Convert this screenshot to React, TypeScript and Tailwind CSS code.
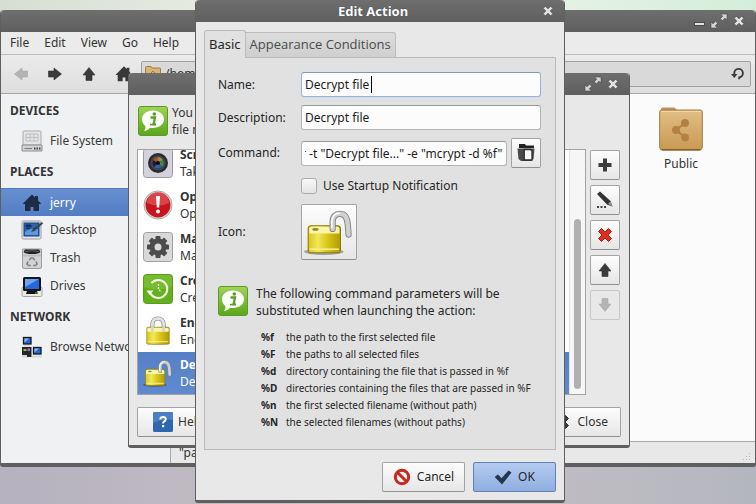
import { useLayoutEffect, useRef } from 'react';
import type { ReactNode } from 'react';

/* ---------- icons ---------- */

function Padlock({ open = false, className }: { open?: boolean; className: string }) {
  return (
    <svg viewBox="0 0 48 48" className={className} aria-hidden="true">
      <defs>
        <linearGradient id="lockBody" x1="0" y1="0" x2="1" y2="0">
          <stop offset="0" stopColor="#d8c81c" />
          <stop offset="0.3" stopColor="#f1e75a" />
          <stop offset="0.6" stopColor="#d8c616" />
          <stop offset="1" stopColor="#b09a0a" />
        </linearGradient>
      </defs>
      <ellipse cx={open ? 19 : 24} cy="43" rx="19" ry="3" fill="#000" opacity="0.3" />
      {open ? (
        <>
          <rect x="4" y="18" width="31" height="26" rx="3" fill="url(#lockBody)" stroke="#8a7a08" />
          <path d="M5 21q0-2 2-2h25q2 0 2 2v4.500H5z" fill="#faf5a8" />
          <ellipse cx="11" cy="21.500" rx="3" ry="1.300" fill="#8d8630" />
          <path d="M5.500 40.500h28" stroke="#f6ee8a" strokeWidth="1.500" />
          <path d="M27.500 21V14c0-5 3-7.500 7-7.500 5 0 7 4 7.500 10l.8 10" fill="none" stroke="#858585" strokeWidth="6" strokeLinecap="round" />
          <path d="M27.500 21V14c0-5 3-7.500 7-7.500 5 0 7 4 7.500 10l.8 10" fill="none" stroke="#d0d0d0" strokeWidth="4.200" strokeLinecap="round" />
          <path d="M26.700 20V14c0-5 3-8 7-8" fill="none" stroke="#fff" strokeWidth="1.500" strokeLinecap="round" />
        </>
      ) : (
        <>
          <path d="M15 23V13c0-6 4-9 9-9s9 3 9 9v10" fill="none" stroke="#808080" strokeWidth="6.500" />
          <path d="M15 23V13c0-6 4-9 9-9s9 3 9 9v10" fill="none" stroke="#e2e2e2" strokeWidth="4.500" />
          <rect x="6" y="18" width="36" height="27" rx="2" fill="url(#lockBody)" stroke="#8a7a08" />
          <path d="M7 21q0-2 2-2h30q2 0 2 2v4H7z" fill="#faf5a8" />
          <path d="M15 25V17M33 25V17" stroke="#d5d5d0" strokeWidth="4.500" />
          <path d="M7.500 41h33" stroke="#f6ee8a" strokeWidth="1.500" />
        </>
      )}
    </svg>
  );
}

function InfoIcon() {
  return (
    <svg viewBox="0 0 30 30" className="size-[30px] shrink-0" aria-hidden="true">
      <defs>
        <linearGradient id="infoGreen" x1="0" y1="0" x2="0" y2="1">
          <stop offset="0" stopColor="#a3d35b" />
          <stop offset="0.6" stopColor="#72b92f" />
          <stop offset="1" stopColor="#5ba51d" />
        </linearGradient>
      </defs>
      <rect x="0.500" y="0.500" width="29" height="29" rx="2.500" fill="url(#infoGreen)" stroke="#5c9a28" />
      <path d="M15 4.500c6.300 0 11 3.700 11 8.800S21.300 22 15 22c-1 0-2-.1-3-.3-1.500 1.800-3.600 3-6 3.300 1-1.300 1.600-2.900 1.500-4.800C5.300 18.500 4 16 4 13.300 4 8.200 8.700 4.500 15 4.500z" fill="#fcfdf8" />
      <circle cx="16.300" cy="8" r="1.800" fill="#5f9c2a" />
      <path d="M12.500 11.500h4.500l-1.400 6.500h2" fill="none" stroke="#5f9c2a" strokeWidth="2.300" />
      <path d="M12 18.600h6" stroke="#5f9c2a" strokeWidth="1.600" />
    </svg>
  );
}

function ArrowIcon({ turn = '', faded = false }: { turn?: string; faded?: boolean }) {
  return (
    <svg viewBox="0 0 16 16" className={`size-4 ${turn}`} aria-hidden="true">
      <path d="M8 1.500 14 9h-3v5.500H5V9H2z" fill={faded ? '#b4b4b4' : '#3b3b3b'} stroke={faded ? '#a8a8a8' : '#303030'} strokeWidth="0.600" />
    </svg>
  );
}

function HomeIcon({ className, color }: { className: string; color: string }) {
  return (
    <svg viewBox="0 0 20 20" className={className} aria-hidden="true">
      <path d="M10 1.500 13 4.500V3h3v4.500l3.500 3.500H17v7h-5.500v-4h-3v4H3v-7H.5z" fill={color} />
    </svg>
  );
}

function Cross({ className, color, edge }: { className: string; color: string; edge: string }) {
  return (
    <svg viewBox="0 0 16 16" className={className} aria-hidden="true">
      <path d="M4.500 1.500 8 5l3.500-3.500 3 3L11 8l3.500 3.500-3 3L8 11l-3.500 3.500-3-3L5 8 1.500 4.500z" fill={color} stroke={edge} strokeWidth="1" strokeLinejoin="round" />
    </svg>
  );
}

function MaximizeIcon() {
  return (
    <svg viewBox="0 0 18 16" className="h-4 w-[18px]" aria-hidden="true">
      <path d="M10.500 1H17v6l-2-1.800-2.600 2.500-2.100-2 2.500-2.500zM1 9l2 1.800 2.600-2.500 2.100 2-2.500 2.500L7.500 15H1z" fill="#d4d4d4" stroke="#484848" strokeWidth="0.600" />
    </svg>
  );
}

function DriveBoxIcon() {
  return (
    <svg viewBox="0 0 22 22" className="size-[22px]" aria-hidden="true">
      <rect x="2" y="1" width="18" height="14" rx="1" fill="#e6e6e6" stroke="#aaa" />
      <path d="M5 4h12v7H5zM5 7.500h12M9 4v7M13 4v7" fill="none" stroke="#bcbcbc" />
      <path d="M1 15h20v6H1z" fill="#d2d2d2" stroke="#8e8e8e" />
      <path d="M3.500 18.500H11" stroke="#777" />
      <path d="M13 17.500h1.500v2H13zM15.500 17.500H17v2h-1.500zM18 17.500h1.500v2H18z" fill="#444" />
    </svg>
  );
}

function DesktopIcon() {
  return (
    <svg viewBox="0 0 22 22" className="size-[22px]" aria-hidden="true">
      <rect x="1" y="2" width="19" height="18" rx="1.500" fill="#e4e6e8" stroke="#9a9da1" />
      <rect x="3" y="4" width="15" height="13" fill="#2a67b4" stroke="#173e74" />
      <path d="M4 13q5-4 13-3v6H4z" fill="#5b98dc" />
      <path d="M5 6h5v2H5zM5 9.500h4M12 9.500h4" stroke="#12305c" fill="#12305c" />
      <path d="M21 3 12 10l-2 3 3.500-1L22 4.500z" fill="#3b3f46" />
    </svg>
  );
}

function TrashIcon() {
  return (
    <svg viewBox="0 0 22 22" className="size-[22px]" aria-hidden="true">
      <path d="M1.500 2h19v18q0 1.500-1.500 1.500H3Q1.500 21.500 1.500 20z" fill="#d4d4d4" stroke="#9c9c9c" />
      <rect x="2" y="7.500" width="18" height="2" fill="#bdbdbd" />
      <path d="M4 2.500h14l1.500 2.500q-2 2-8.500 2T2.500 5z" fill="#1f1f1f" />
      <path d="M4 4.500q7-1.500 14 0" stroke="#6a6a6a" fill="none" />
      <path d="M8.300 13.200 10 11h2l1.800 2.200M15 14.500l1 2.500-1.500 1.500H12M7 14.500 6 17l1.500 1.500H10" fill="none" stroke="#828282" strokeWidth="1.700" />
    </svg>
  );
}

function MonitorIcon() {
  return (
    <svg viewBox="0 0 22 22" className="size-[22px]" aria-hidden="true">
      <rect x="1" y="12" width="20" height="9.500" rx="1.500" fill="#e9e9e6" stroke="#a5a5a0" />
      <rect x="2" y="2" width="18" height="14" rx="1.500" fill="#15171b" />
      <rect x="4" y="4" width="14" height="10" fill="#2768d8" />
      <path d="M4 4h14L4 12z" fill="#6ea2f2" />
      <path d="M6 16h10l1 3H5z" fill="#101114" />
      <path d="M14 18h3" stroke="#7dba32" />
    </svg>
  );
}

function NetworkIcon() {
  return (
    <svg viewBox="0 0 22 22" className="size-[22px]" aria-hidden="true">
      <path d="M2.500 9h7v2h-7z" fill="#deded8" />
      <rect x="2.500" y="1.500" width="7.500" height="6.500" fill="#2566d4" stroke="#15171b" strokeWidth="1.300" />
      <rect x="12.500" y="11.500" width="7.500" height="6.500" fill="#2566d4" stroke="#15171b" strokeWidth="1.300" />
      <path d="M3.500 2.500h4.500l-4.500 4zM13.500 12.500H18l-4.500 4z" fill="#8db8f6" />
      <path d="M1 11h9.500v10H1z" fill="#25262a" />
      <path d="M2.500 13h3v2h-3z" fill="#8cc63f" />
      <path d="M6.500 12.500h2.500v2.500H6.500z" fill="#9a6bd0" />
      <path d="M1 19h5v2.500H1zM11 19.500h10v2H11z" fill="#d8d8d4" />
    </svg>
  );
}

function CameraIcon() {
  return (
    <svg viewBox="0 0 30 30" className="size-[30px]" aria-hidden="true">
      <rect x="0.500" y="0.500" width="29" height="29" rx="3" fill="#d3d2da" stroke="#9a99a2" />
      <circle cx="15" cy="15" r="10" fill="#2b2c31" />
      <circle cx="15" cy="15" r="7.500" fill="#45464d" />
      <circle cx="15" cy="15" r="5.500" fill="#1a1c30" />
      <path d="M15 15 10 12a6 6 0 0 1 5-3z" fill="#b04a3a" />
      <path d="M15 15V9a6 6 0 0 1 5 3z" fill="#a38a34" />
      <path d="M15 15l5-3a6 6 0 0 1-1 7z" fill="#3d8a4e" />
      <path d="M15 15l4 4a6 6 0 0 1-8 0z" fill="#365cae" />
      <circle cx="15" cy="15" r="2" fill="#0d0e16" />
    </svg>
  );
}

function AlertIcon() {
  return (
    <svg viewBox="0 0 30 30" className="size-[30px]" aria-hidden="true">
      <circle cx="15" cy="15" r="14" fill="#dedede" stroke="#a9a9a9" />
      <circle cx="15" cy="15" r="12.500" fill="#c8141c" />
      <path d="M4 13a11 11 0 0 1 22 0q-11 5-22 0z" fill="#e05a5c" opacity="0.700" />
      <path d="M13 6h4l-.8 11.500h-2.400z" fill="#fff" />
      <circle cx="15" cy="21.500" r="2" fill="#fff" />
    </svg>
  );
}

function GearIcon() {
  const teeth = [0, 45, 90, 135, 180, 225, 270, 315];
  return (
    <svg viewBox="0 0 30 30" className="size-[30px]" aria-hidden="true">
      <rect x="0.500" y="0.500" width="29" height="29" rx="3" fill="#d9d9d9" stroke="#a0a0a0" />
      {teeth.map((a) => (
        <rect key={a} x="12.500" y="4" width="5" height="6" rx="0.800" fill="#4c4c4c" transform={`rotate(${a} 15 15)`} />
      ))}
      <circle cx="15" cy="15" r="6" fill="none" stroke="#4c4c4c" strokeWidth="5" />
    </svg>
  );
}

function HistoryIcon() {
  return (
    <svg viewBox="0 0 30 30" className="size-[30px]" aria-hidden="true">
      <rect x="0.500" y="0.500" width="29" height="29" rx="3" fill="#62b01c" stroke="#589a20" />
      <path d="M1 4q0-3 3-3h22q3 0 3 3v9q-14 5-28 0z" fill="#8cc63f" opacity="0.500" />
      <path d="M7 18.500A9 9 0 1 0 8.500 9" fill="none" stroke="#f4faec" strokeWidth="2" />
      <path d="M3.500 16.500h7L6.500 21z" fill="#f4faec" />
      <path d="M15.500 10v5.500l3 2.500" fill="none" stroke="#e4f4d0" strokeWidth="1.300" strokeDasharray="2 1" />
    </svg>
  );
}

function FolderMini() {
  return (
    <svg viewBox="0 0 16 16" className="size-4" aria-hidden="true">
      <path d="M.5 1.500q0-1 1-1H6l1 1.500h7.500q1 0 1 1v11q0 1-1 1h-13q-1 0-1-1z" fill="#dcb377" stroke="#a67a3c" />
      <path d="M8 5 3.500 9.500H5V13h6V9.500h1.500z" fill="none" stroke="#a67a3c" />
    </svg>
  );
}

function SharedFolder() {
  return (
    <svg viewBox="0 0 44 46" className="h-[46px] w-11" aria-hidden="true">
      <defs>
        <linearGradient id="folderTan" x1="0" y1="0" x2="0" y2="1">
          <stop offset="0" stopColor="#e2bd86" />
          <stop offset="1" stopColor="#c99a51" />
        </linearGradient>
      </defs>
      <path d="M2 10V3q0-1.500 1.500-1.500h12L18 4h22q2 0 2 2v6z" fill="#bd9460" />
      <path d="M.7 6q0-2 2-2h38.600q2 0 2 2v35q0 3-3 3H3.700q-3 0-3-3z" fill="url(#folderTan)" stroke="#a5793a" />
      <path d="M2 5.500h40" stroke="#f0d6ab" />
      <path d="M2.500 43.700h39" stroke="#83602c" strokeWidth="1.500" />
      <g fill="#b38243">
        <circle cx="26" cy="17" r="4" />
        <circle cx="26" cy="31.500" r="4" />
        <circle cx="17" cy="24" r="4" />
      </g>
      <path d="M26 17l-9 7 9 7.500" fill="none" stroke="#b38243" strokeWidth="2.200" />
    </svg>
  );
}

/* ---------- shared pieces ---------- */

const button =
  'flex items-center rounded-xs border border-[#a3a3a3] border-b-[#8f8f8f] bg-linear-to-b from-[#fdfdfd] to-[#e6e6e6]';

function TitleBar({ title, controls }: { title?: string; controls: ReactNode }) {
  return (
    <header className="flex h-[22px] shrink-0 items-center rounded-t-[4px] bg-linear-to-b from-[#6e6e6e] to-[#5f5f5f]">
      <h2 className="flex-1 pl-2 text-center text-[13px] leading-5 font-bold text-white [text-shadow:0_0_1px_#26344a]">{title}</h2>
      <div className="flex items-center gap-[5px] pr-[10px]">{controls}</div>
    </header>
  );
}

function CloseControl() {
  return (
    <button type="button" aria-label="Close window" className="flex">
      <Cross className="size-3" color="#e2e2e2" edge="#4a4a4a" />
    </button>
  );
}

function MaximizeControl() {
  return (
    <button type="button" aria-label="Maximize" className="flex">
      <MaximizeIcon />
    </button>
  );
}

/* ---------- file manager ---------- */

function PlaceHeading({ children }: { children: ReactNode }) {
  return <h3 className="flex h-[33px] items-center pl-[9px] font-bold text-[#333]">{children}</h3>;
}

function Place({ icon, label, active = false }: { icon: ReactNode; label: string; active?: boolean }) {
  return (
    <a
      href="#"
      className={`flex h-7 items-center gap-[7px] pl-5 whitespace-nowrap ${
        active ? 'border-t border-[#4f7abf] bg-linear-to-b from-[#6790d0] to-[#527dc2] text-white' : 'text-[#3a3a3a]'
      }`}
    >
      <span className="flex w-[22px] justify-center">{icon}</span>
      {label}
    </a>
  );
}

function FileManager() {
  return (
    <section className="absolute inset-x-0 top-[10px] flex h-[457px] flex-col rounded-t-[4px] rounded-b-[3px] border-x border-b-4 border-[#5f5f5f] bg-[#e8e8e8]">
      <TitleBar
        controls={
          <>
            <button type="button" aria-label="Minimize" className="mt-[6px] h-[4px] w-[11px] border border-[#4a4a4a] bg-[#e2e2e2]" />
            <MaximizeControl />
            <CloseControl />
          </>
        }
      />
      <nav className="flex h-[23px] items-center gap-[15px] border-b border-[#bcbcbc] bg-[#ebebeb] px-[9px] text-[#333]">
        {['File', 'Edit', 'View', 'Go', 'Help'].map((m) => (
          <button key={m} type="button">
            {m}
          </button>
        ))}
      </nav>
      <div className="flex h-[39px] items-center border-b border-[#a6a6a6] bg-linear-to-b from-[#ebebeb] to-[#dedede] pr-1">
        <div className="flex w-[140px] items-center gap-[18px] pl-3">
          <button type="button" aria-label="Back"><ArrowIcon turn="-rotate-90" faded /></button>
          <button type="button" aria-label="Forward"><ArrowIcon turn="rotate-90" /></button>
          <button type="button" aria-label="Up"><ArrowIcon /></button>
          <button type="button" aria-label="Home"><HomeIcon className="size-[18px]" color="#383838" /></button>
        </div>
        <div className="flex h-[26px] flex-1 items-center gap-1 rounded-xs border border-[#a0a0a0] bg-[#d9d9d9] pr-1 pl-[3px]">
          <FolderMini />
          <span className="flex-1 text-[#333]">/home/jerry</span>
          <button type="button" aria-label="Reload">
            <svg viewBox="0 0 16 16" className="size-4" aria-hidden="true">
              <path d="M4.300 9.500V7.200a4.300 4.300 0 1 1 4.900 4.200v1.800" fill="none" stroke="#3b3b3b" strokeWidth="1.900" />
              <path d="M1 8h6.500l-3.200 4z" fill="#3b3b3b" />
            </svg>
          </button>
        </div>
      </div>
      <div className="flex flex-1">
        <aside className="w-[170px] border-r border-[#a8a8a8] bg-[#eff1f3]">
          <PlaceHeading>DEVICES</PlaceHeading>
          <Place icon={<DriveBoxIcon />} label="File System" />
          <PlaceHeading>PLACES</PlaceHeading>
          <Place icon={<HomeIcon className="size-5" color="#1c2c44" />} label="jerry" active />
          <Place icon={<DesktopIcon />} label="Desktop" />
          <Place icon={<TrashIcon />} label="Trash" />
          <Place icon={<MonitorIcon />} label="Drives" />
          <PlaceHeading>NETWORK</PlaceHeading>
          <Place icon={<NetworkIcon />} label="Browse Network" />
        </aside>
        <div className="flex flex-1 flex-col">
          <main className="flex flex-1 justify-end bg-[#fbfbfb]">
            <figure className="mt-3 mr-[52px] flex h-20 flex-col items-center">
              <SharedFolder />
              <figcaption className="mt-[3px] text-[#333]">Public</figcaption>
            </figure>
          </main>
          <footer className="flex h-[22px] items-center justify-between border-t border-[#a8a8a8] pr-1 pl-2 text-[#333]">
            <span>"package" selected</span>
            <svg viewBox="0 0 8 8" className="mt-2 size-2" aria-hidden="true">
              <path d="M6 0h1v1H6zM3 3h1v1H3zM6 3h1v1H6zM0 6h1v1H0zM3 6h1v1H3zM6 6h1v1H6z" fill="#b8b8b8" />
            </svg>
          </footer>
        </div>
      </div>
    </section>
  );
}

/* ---------- custom actions ---------- */

const actions = [
  { icon: <CameraIcon />, name: 'Screenshot', note: 'Take a screenshot' },
  { icon: <AlertIcon />, name: 'Open as Root', note: 'Open as root' },
  { icon: <GearIcon />, name: 'Make Executable', note: 'Make executable' },
  { icon: <HistoryIcon />, name: 'Create Backup', note: 'Create backup' },
  { icon: <Padlock className="size-[30px]" />, name: 'Encrypt file', note: 'Encrypt file' },
  { icon: <Padlock open className="size-[30px]" />, name: 'Decrypt file', note: 'Decrypt file', active: true },
];

function SideButton({ label, disabled = false, children }: { label: string; disabled?: boolean; children: ReactNode }) {
  return (
    <button type="button" aria-label={label} disabled={disabled} className={`${button} size-[30px] justify-center disabled:border-[#c6c6c6] disabled:bg-none`}>
      {children}
    </button>
  );
}

function CustomActions() {
  return (
    <section className="absolute top-[73px] left-[128px] flex h-[375px] w-[502px] flex-col rounded-t-[4px] rounded-b-[3px] border-x border-b-3 border-[#5f5f5f] bg-[#e8e8e8]">
      <TitleBar controls={<><MaximizeControl /><CloseControl /></>} />
      <div className="flex flex-1 flex-col px-2 pb-2">
        <div className="flex h-[54px] gap-1 pt-[11px] pl-px">
          <InfoIcon />
          <p className="-mt-0.5 leading-[17px] whitespace-nowrap text-[#333]">
            You can configure custom actions that will appear in the
            <br />
            file managers context menus for certain kinds of files.
          </p>
        </div>
        <div className="flex gap-1">
          <div className="flex h-[246px] flex-1 border border-[#a3a3a3] bg-white">
            <ul className="flex flex-1 flex-col justify-end overflow-hidden">
              {actions.map((a) => (
                <li
                  key={a.name}
                  className={`flex h-[42px] shrink-0 items-center gap-[7px] pl-[5px] leading-[17px] ${
                    a.active ? 'bg-linear-to-b from-[#5580c6] to-[#5f8ace] text-white' : 'text-[#333]'
                  }`}
                >
                  {a.icon}
                  <div>
                    <p className="font-bold">{a.name}</p>
                    <p>{a.note}</p>
                  </div>
                </li>
              ))}
            </ul>
            <div className="flex w-4 flex-col items-center justify-end border-l border-[#e2e2e2] bg-[#f6f6f6] pb-[5px]">
              <div className="h-[170px] w-[7px] rounded-full bg-[#b0b0b0]" />
            </div>
          </div>
          <div className="flex flex-col gap-[5px] pt-px pr-px">
            <SideButton label="Add action">
              <svg viewBox="0 0 16 16" className="size-4" aria-hidden="true">
                <path d="M6 1.500h4V6h4.500v4H10v4.500H6V10H1.500V6H6z" fill="#3d3d3d" />
              </svg>
            </SideButton>
            <SideButton label="Edit action">
              <svg viewBox="0 0 18 18" className="size-[18px]" aria-hidden="true">
                <path d="M1 3 4 .5 14.500 10l2 5.500L11 13.500z" fill="#333" />
                <path d="M12 12.800l2.500-2.300 2 5z" fill="#9a9a9a" />
                <path d="M1 15h2v2H1zM4.500 15h2v2h-2zM8 15h2v2H8z" fill="#444" />
              </svg>
            </SideButton>
            <SideButton label="Delete action">
              <Cross className="size-4" color="#dc2f1f" edge="#b01c10" />
            </SideButton>
            <SideButton label="Move up">
              <ArrowIcon />
            </SideButton>
            <SideButton label="Move down" disabled>
              <ArrowIcon turn="rotate-180" faded />
            </SideButton>
          </div>
        </div>
        <div className="mt-auto flex justify-between">
          <button type="button" className={`${button} h-[30px] gap-[5px] pr-4 pl-[15px] text-[#333]`}>
            <svg viewBox="0 0 20 20" className="size-5" aria-hidden="true">
              <rect width="20" height="20" rx="1.500" fill="#2f66b0" />
              <path d="M0 11q10-5 20-3V1.500Q20 0 18.500 0h-17Q0 0 0 1.500z" fill="#4a7fc4" />
              <path d="M7.300 7.500q0-2.500 2.700-2.500t2.700 2.200q0 1.300-1.400 2.100-1.300.8-1.300 2.200" fill="none" stroke="#fff" strokeWidth="2" />
              <path d="M9 13h2.200v2.200H9z" fill="#fff" />
            </svg>
            Help
          </button>
          <button type="button" className={`${button} h-[30px] gap-2 pr-3 pl-4 text-[#333]`}>
            <Cross className="size-4" color="#3d3d3d" edge="#303030" />
            Close
          </button>
        </div>
      </div>
    </section>
  );
}

/* ---------- edit action ---------- */

const field =
  'h-[25px] w-full rounded-[3px] border border-[#b4b4b4] border-t-[#999] bg-[#fcfcfc] px-[3px] text-[#1c1c1c] outline-none';

const parameters = [
  ['%f', 'the path to the first selected file'],
  ['%F', 'the paths to all selected files'],
  ['%d', 'directory containing the file that is passed in %f'],
  ['%D', 'directories containing the files that are passed in %F'],
  ['%n', 'the first selected filename (without path)'],
  ['%N', 'the selected filenames (without paths)'],
];

function EditAction() {
  const command = useRef<HTMLInputElement>(null);
  useLayoutEffect(() => {
    const el = command.current;
    if (!el) return;
    const showEnd = () => {
      el.scrollLeft = el.scrollWidth;
    };
    showEnd();
    document.fonts.ready.then(showEnd);
  }, []);

  return (
    <section className="absolute top-0 left-[195px] flex h-[503px] w-[370px] flex-col rounded-t-[4px] rounded-b-[3px] border-x border-b-3 border-[#5f5f5f] bg-[#e8e8e8] text-[#262626]">
      <TitleBar title="Edit Action" controls={<CloseControl />} />
      <div className="flex flex-1 flex-col px-2 pt-2 pb-2">
        <div role="tablist" className="flex items-end text-[13px]">
          <button type="button" role="tab" aria-selected="true" className="z-10 -mb-px h-7 rounded-t-[3px] border border-b-0 border-[#bbb] bg-[#e1e1e1] px-1">
            Basic
          </button>
          <button type="button" role="tab" aria-selected="false" className="h-[25px] rounded-tr-[3px] border border-b-0 border-l-0 border-[#bdbdbd] bg-linear-to-b from-[#dcdcdc] to-[#cfcfcf] px-1 font-['Open_Sans','Noto_Sans',sans-serif] text-[#4a4a4a]">
            Appearance Conditions
          </button>
        </div>
        <div role="tabpanel" className="flex h-[393px] flex-col border border-[#bbb] bg-[#e1e1e1] pt-[14px] pr-[14px] pl-[13px]">
          <div className="grid grid-cols-[83px_1fr] items-center">
            <label htmlFor="name">Name:</label>
            <div className="relative">
              <input id="name" defaultValue="Decrypt file" className="block h-[25px] w-full rounded-[3px] border border-[#9db2d2] border-t-[#8397bb] bg-[#fcfcfc] px-[3px] text-[#1c1c1c] shadow-[0_1px_1px_#d0dcf0] outline-none" />
              <span aria-hidden="true" className="absolute top-1 left-[70px] h-[17px] w-px bg-black" />
            </div>
            <label htmlFor="description" className="mt-2">Description:</label>
            <input id="description" defaultValue="Decrypt file" className={`${field} mt-2`} />
            <label htmlFor="command" className="mt-2">Command:</label>
            <div className="mt-2 flex items-center gap-1">
              <input id="command" ref={command} defaultValue={'r -t "Decrypt file..." -e "mcrypt -d %f"'} className={`${field} min-w-0 flex-1`} />
              <button type="button" aria-label="Browse for command" className={`${button} size-[30px] shrink-0 justify-center`}>
                <svg viewBox="0 0 20 20" className="size-5" aria-hidden="true">
                  <path d="M3 1h6l1 1.500h8V5H3z" fill="#222" />
                  <path d="M1.500 5.500h17L17.500 16 15 18H5l-2.500-2z" fill="#4a4a4a" />
                  <path d="M8.200 6.500h6.300l1.500 1.500V17H8.200z" fill="#fafafa" stroke="#2b2b2b" strokeWidth="1.300" />
                </svg>
              </button>
            </div>
            <label className="col-start-2 mt-[10px] flex h-4 items-center gap-[6px]">
              <input type="checkbox" className="size-4 appearance-none rounded-[3px] border border-[#ababab] bg-linear-to-b from-[#f8f8f8] to-[#e4e4e4]" />
              Use Startup Notification
            </label>
            <span className="mt-[10px]">Icon:</span>
            <button type="button" aria-label="Choose icon" className={`${button} mt-[10px] size-14 justify-center`}>
              <Padlock open className="size-[50px]" />
            </button>
          </div>
          <div className="mt-[26px] flex gap-2">
            <InfoIcon />
            <div className="-mt-px leading-[17px]">
              <p className="w-[280px]">
                The following command parameters will be
                <br />
                substituted when launching the action:
              </p>
              <table className="mt-[10px] ml-[5px] text-[10px] whitespace-nowrap">
                <tbody>
                  {parameters.map(([code, text]) => (
                    <tr key={code}>
                      <th scope="row" className="min-w-[25px] p-0 text-left font-bold">{code}</th>
                      <td className="p-0">{text}</td>
                    </tr>
                  ))}
                </tbody>
              </table>
            </div>
          </div>
        </div>
        <div className="mt-auto flex justify-end gap-2">
          <button type="button" className={`${button} h-[30px] w-[83px] justify-center gap-[6px]`}>
            <svg viewBox="0 0 18 18" className="size-[18px]" aria-hidden="true">
              <circle cx="9" cy="9" r="6.700" fill="#f3f3f3" stroke="#c8281e" strokeWidth="3" />
              <path d="M4.500 4.500l9 9" stroke="#c8281e" strokeWidth="3" />
            </svg>
            Cancel
          </button>
          <button type="button" className="flex h-[30px] w-[83px] items-center justify-center gap-[6px] rounded-xs border border-[#6580b0] bg-linear-to-b from-[#b3cbef] to-[#8faee0]">
            <svg viewBox="0 0 18 16" className="h-4 w-[18px]" aria-hidden="true">
              <path d="M.7 8 4 5.500l3.500 3.800L14.500 1.500l3 2L8 15.500z" fill="#26344c" />
            </svg>
            OK
          </button>
        </div>
      </div>
    </section>
  );
}

export default function App() {
  return (
    <div className="relative h-screen min-h-[504px] overflow-hidden bg-[#c4bfc8] font-['Noto_Sans','Open_Sans',sans-serif] text-[12px]">
      <div className="absolute inset-x-0 top-0 h-8 bg-linear-to-r from-[#d6ded4] via-[#f4f6ee] to-[#d4eddb]" />
      <div className="absolute inset-x-0 bottom-0 h-12 bg-linear-to-r from-[#b5b1bf] via-[#c8c2c4] to-[#b4b6bf]" />
      <FileManager />
      <CustomActions />
      <EditAction />
    </div>
  );
}
